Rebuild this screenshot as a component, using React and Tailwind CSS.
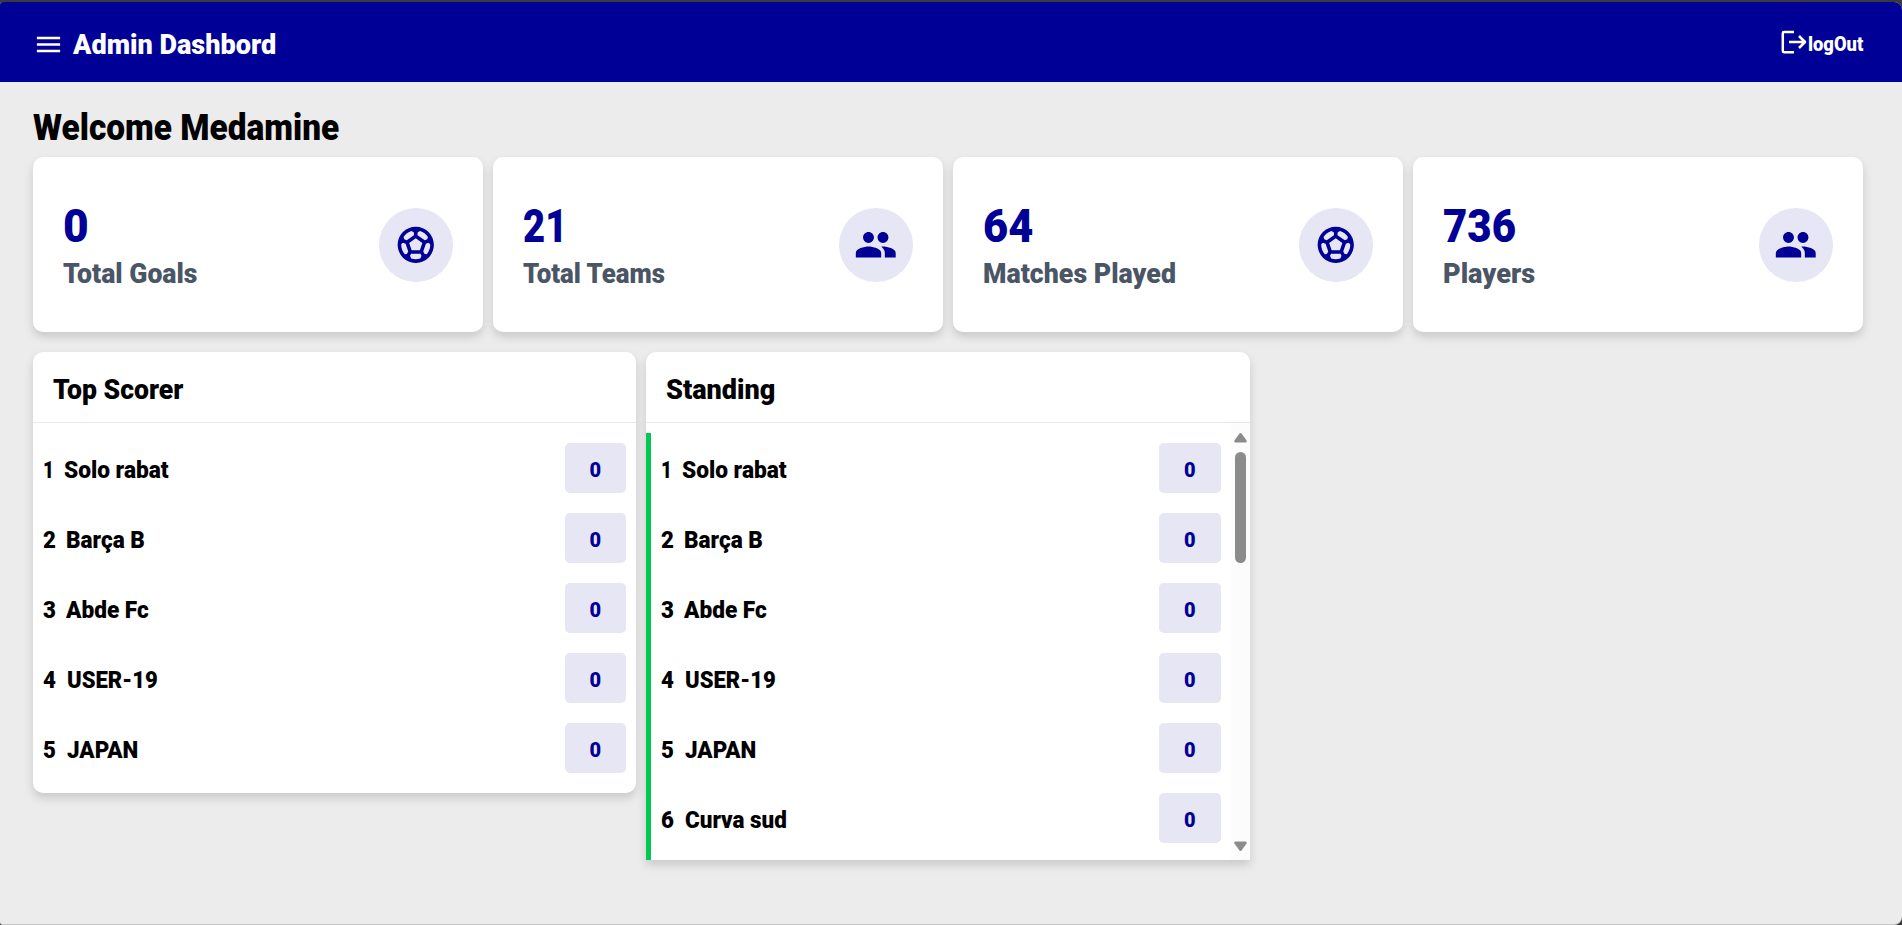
import { useLayoutEffect, useRef } from "react";
import { MdOutlineSportsSoccer, MdMenu, MdPeople } from "react-icons/md";

// Draws a line of text squeezed or stretched to a set width.
function Fit({ width, className = "", children }) {
  const ref = useRef(null);
  useLayoutEffect(() => {
    const el = ref.current;
    el.style.transform = `scaleX(${width / el.offsetWidth})`;
  }, [width, children]);
  return (
    <span className={`block whitespace-nowrap ${className}`} style={{ width }}>
      <span ref={ref} className="inline-block origin-left">{children}</span>
    </span>
  );
}

const stats = [
  { value: "0", vw: 26, label: "Total Goals", lw: 134, Icon: MdOutlineSportsSoccer },
  { value: "21", vw: 44, label: "Total Teams", lw: 142, Icon: MdPeople },
  { value: "64", vw: 50, label: "Matches Played", lw: 193, Icon: MdOutlineSportsSoccer },
  { value: "736", vw: 73, label: "Players", lw: 92, Icon: MdPeople },
];

const teams = [
  { name: "Solo rabat", w: 105, nw: 11, gap: "gap-[10px]" },
  { name: "Barça B", w: 79, nw: 13, gap: "gap-[10px]" },
  { name: "Abde Fc", w: 83, nw: 13, gap: "gap-[10px]" },
  { name: "USER-19", w: 91, nw: 13, gap: "gap-[11px]" },
  { name: "JAPAN", w: 71, nw: 13, gap: "gap-[11px]" },
  { name: "Curva sud", w: 102, nw: 13, gap: "gap-[11px]" },
];

function TeamRow({ team, rank, marked }) {
  return (
    <li className={`flex h-[70px] items-center justify-between p-[10px] ${marked ? "border-l-[5px] border-[#00c950]" : ""}`}>
      <div className={`flex items-center pt-1 text-2xl leading-[50px] font-black text-black ${team.gap}`}>
        <Fit width={team.nw}>{rank}</Fit>
        <Fit width={team.w}>{team.name}</Fit>
      </div>
      <div className={`flex h-[50px] items-center justify-center rounded-[5px] bg-[#e6e6f4] pt-[3px] text-xl font-black text-[#000096] ${marked ? "w-[62px]" : "w-[61px]"}`}>
        <Fit width={12}>0</Fit>
      </div>
    </li>
  );
}

function LogoutIcon() {
  return (
    <svg width="27" height="24" viewBox="0 0 27 24" fill="none" stroke="currentColor" strokeWidth="2.5" strokeLinejoin="round">
      <path d="M14 2H4Q2.800 2 2.800 3.200V21Q2.800 22.200 4 22.200H14" />
      <path d="M9 12H26M19 6l6 6-6 6" />
    </svg>
  );
}

export default function App() {
  return (
    <div className="h-[925px] overflow-hidden bg-[#3a3a3a] pt-[2px] font-['Roboto',sans-serif]">
      <div className="flex h-[923px] flex-col overflow-hidden rounded-r-[8px] rounded-tl-[3px] rounded-bl-[3px] border-b border-[#c4c4c4] bg-[#ececec]">
        <header className="flex h-20 shrink-0 items-center justify-between bg-[#000096] pr-[39px] pl-[33px] text-white">
          <div className="flex items-center gap-[9px]">
            <MdMenu size={31} className="mt-[5px]" />
            <Fit width={203} className="pt-[5px] text-[28px] font-black">Admin Dashbord</Fit>
          </div>
          <div className="flex items-center gap-[1px]">
            <LogoutIcon />
            <Fit width={55} className="pt-[3px] text-xl leading-7 font-black">logOut</Fit>
          </div>
        </header>

        <main className="px-[33px] pt-[20px]">
          <h1 className="h-[55px] pt-[1px] text-4xl leading-[51px] font-black text-black">
            <Fit width={306}>Welcome Medamine</Fit>
          </h1>

          <section className="flex gap-[10px]">
            {stats.map(({ value, vw, label, lw, Icon }) => (
              <div key={label} className="flex h-[175px] w-[450px] items-center justify-between rounded-[10px] bg-white p-[30px] shadow-[0_5px_10px_rgba(0,0,0,0.15)]">
                <div className="flex flex-col pt-[3px]">
                  <Fit width={vw} className="text-[46px] leading-[56px] font-black text-[#000096]">{value}</Fit>
                  <Fit width={lw} className="text-[28px] leading-[40px] font-black text-[#4a5565]">{label}</Fit>
                </div>
                <div className="flex size-[74px] items-center justify-center rounded-full bg-[#e6e6f4] pr-[1px] text-[#000096]">
                  <Icon size={43.5} />
                </div>
              </div>
            ))}
          </section>

          <section className="mt-5 flex items-start gap-[10px]">
            <div className="w-[603px] rounded-[10px] bg-white shadow-[0_5px_10px_rgba(0,0,0,0.15)]">
              <h2 className="h-[71px] border-b border-[#e9e9ea] px-5 pt-[2px] text-[28px] leading-[72px] font-black text-black">
                <Fit width={130}>Top Scorer</Fit>
              </h2>
              <ul className="py-[10px]">
                {teams.slice(0, 5).map((team, i) => (
                  <TeamRow key={team.name} team={team} rank={i + 1} />
                ))}
              </ul>
            </div>

            <div className="w-[604px] rounded-t-[10px] bg-white shadow-[0_5px_10px_rgba(0,0,0,0.15)]">
              <h2 className="h-[71px] border-b border-[#e9e9ea] px-5 pt-[2px] text-[28px] leading-[72px] font-black text-black">
                <Fit width={109}>Standing</Fit>
              </h2>
              <div className="flex h-[437px] overflow-hidden">
                <ul className="grow pt-[10px]">
                  {teams.map((team, i) => (
                    <TeamRow key={team.name} team={team} rank={i + 1} marked />
                  ))}
                  <li className="h-[7px] border-l-[5px] border-[#00c950]" />
                </ul>
                <div className="flex w-[19px] flex-col items-center bg-[#fcfcfc] pt-[10px] pb-[9px] text-[#8b8b8b]">
                  <svg width="13" height="10" viewBox="0 0 13 10" fill="currentColor">
                    <path d="M5.500 .600Q6.500-.400 7.500 .600L12.600 7.500Q13 9.500 11.500 9.500H1.500Q0 9.500 .400 7.500Z" />
                  </svg>
                  <div className="mt-[9px] h-[111px] w-[11px] rounded-full bg-[#8b8b8b]" />
                  <svg width="13" height="10" viewBox="0 0 13 10" fill="currentColor" className="mt-auto">
                    <path d="M5.500 9.400Q6.500 10.400 7.500 9.400L12.600 2.500Q13 .500 11.500 .500H1.500Q0 .500 .400 2.500Z" />
                  </svg>
                </div>
              </div>
            </div>
          </section>
        </main>
      </div>
    </div>
  );
}
